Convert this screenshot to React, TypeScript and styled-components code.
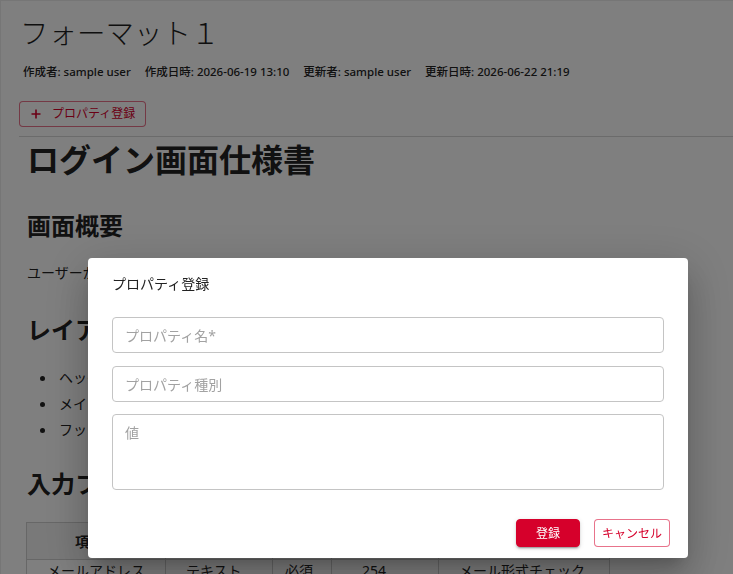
import React from 'react'
import styled, { createGlobalStyle } from 'styled-components'

const GlobalStyle = createGlobalStyle`
  html, body {
    margin: 0;
    padding: 0;
    background: #fff;
  }
  body {
    font-family: "Noto Sans", "Noto Sans CJK JP", sans-serif;
    color: #222;
    overflow: hidden;
  }
`

const RED = '#d6002b'

const Page = styled.div`
  height: 574px;
  box-sizing: border-box;
  border-top: 1px solid #ececec;
  border-left: 1px solid #ececec;
`

const Header = styled.header`
  margin-left: 18px;
  padding: 13px 0 9px 0;
  border-bottom: 1px solid #d6d6d6;
`

const Title = styled.h1`
  margin: 0 0 0 1px;
  font-size: 28.5px;
  line-height: 38px;
  font-weight: 300;
  color: #1e1e1e;
`

const Meta = styled.div`
  display: flex;
  gap: 14px;
  margin: 11px 0 0 4px;
  font-size: 11.5px;
  line-height: 18px;
  font-weight: 500;
  color: #222;
`

const OutlineButton = styled.button`
  display: inline-flex;
  align-items: center;
  gap: 10px;
  height: 26px;
  margin-top: 20px;
  padding: 0 10px;
  background: #fff;
  border: 1px solid rgba(214, 0, 43, 0.55);
  border-radius: 4px;
  color: ${RED};
  font-family: inherit;
  font-size: 12px;
  line-height: 1;
  cursor: pointer;
`

const Content = styled.main`
  padding: 0 24px 0 25px;
`

const DocTitle = styled.h1`
  margin: 4px 0 0 1px;
  font-size: 32px;
  line-height: 38px;
  font-weight: 700;
`

const Section = styled.h2<{ $top: number }>`
  margin: ${p => p.$top}px 0 0 1px;
  font-size: 24px;
  line-height: 30px;
  font-weight: 700;
`

const Para = styled.p`
  margin: 21px 0 0 1px;
  font-size: 14px;
  line-height: 22px;
`

const List = styled.ul`
  margin: 20px 0 0;
  padding: 0;
  list-style: none;
  font-size: 14px;
  line-height: 26px;
`

const Item = styled.li`
  display: flex;
  align-items: center;
  &::before {
    content: '';
    width: 5px;
    height: 5px;
    margin: 0 14px 0 14px;
    border-radius: 50%;
    background: #222;
  }
`

const Table = styled.table`
  margin-top: 23px;
  border-collapse: collapse;
  font-size: 14px;
`

const Th = styled.th<{ $w: number }>`
  width: ${p => p.$w}px;
  height: 37px;
  box-sizing: border-box;
  padding: 0 12px;
  background: #f3f3f3;
  border: 1px solid #cfcfcf;
  font-weight: 700;
  text-align: center;
`

const Td = styled.td<{ $pad?: number }>`
  padding: 0 12px 8px ${p => p.$pad ?? 20}px;
  border: 1px solid #cfcfcf;
  line-height: 22px;
  white-space: nowrap;
`

const Overlay = styled.div`
  position: fixed;
  inset: 0;
  background: rgba(0, 0, 0, 0.5);
  display: flex;
  align-items: flex-start;
  padding: 258px 0 0 88px;
`

const Dialog = styled.div`
  width: 600px;
  height: 300px;
  box-sizing: border-box;
  padding: 16px 18px 11px 24px;
  background: #fff;
  border-radius: 4px;
  box-shadow: 0px 11px 15px -7px rgba(0, 0, 0, 0.2),
    0px 24px 38px 3px rgba(0, 0, 0, 0.14),
    0px 9px 46px 8px rgba(0, 0, 0, 0.12);
  display: flex;
  flex-direction: column;
`

const DialogTitle = styled.div`
  font-size: 14px;
  line-height: 20px;
  color: #222;
`

const Fields = styled.div`
  display: flex;
  flex-direction: column;
  gap: 13px;
  margin-top: 23px;
  width: 552px;
`

const Input = styled.input`
  height: 36px;
  box-sizing: border-box;
  padding: 0 12px;
  border: 1px solid #c4c4c4;
  border-radius: 4px;
  font-family: inherit;
  font-size: 14px;
  color: #222;
  outline: none;
  &::placeholder {
    color: #a2a2a2;
  }
`

const TextArea = styled.textarea`
  height: 76px;
  margin-top: -1px;
  box-sizing: border-box;
  padding: 8px 12px;
  border: 1px solid #c4c4c4;
  border-radius: 4px;
  font-family: inherit;
  font-size: 14px;
  line-height: 20px;
  resize: none;
  outline: none;
  &::placeholder {
    color: #a2a2a2;
  }
`

const Actions = styled.div`
  display: flex;
  justify-content: flex-end;
  gap: 14px;
  margin-top: auto;
`

const ActionButton = styled.button<{ $primary?: boolean }>`
  height: 28px;
  min-width: 64px;
  padding: 0 7px;
  box-sizing: border-box;
  border-radius: 4px;
  font-family: inherit;
  font-size: 12px;
  cursor: pointer;
  background: ${p => (p.$primary ? RED : '#fff')};
  color: ${p => (p.$primary ? '#fff' : RED)};
  border: 1px solid ${p => (p.$primary ? RED : 'rgba(214, 0, 43, 0.55)')};
  box-shadow: ${p =>
    p.$primary
      ? '0px 3px 1px -2px rgba(0,0,0,0.2), 0px 2px 2px 0px rgba(0,0,0,0.14), 0px 1px 5px 0px rgba(0,0,0,0.12)'
      : 'none'};
`

const PlusIcon = () => (
  <svg width="12" height="12" viewBox="0 0 12 12">
    <path d="M6 1.5v9M1.5 6h9" stroke={RED} strokeWidth="1.6" fill="none" />
  </svg>
)

export default function App() {
  return (
    <>
      <GlobalStyle />
      <Page>
        <Header>
          <Title>フォーマット１</Title>
          <Meta>
            <span>作成者: sample user</span>
            <span>作成日時: 2026-06-19 13:10</span>
            <span>更新者: sample user</span>
            <span>更新日時: 2026-06-22 21:19</span>
          </Meta>
          <OutlineButton>
            <PlusIcon />
            プロパティ登録
          </OutlineButton>
        </Header>
        <Content>
          <DocTitle>ログイン画面仕様書</DocTitle>
          <Section $top={32}>画面概要</Section>
          <Para>ユーザーがIDとパスワードでログインする画面。</Para>
          <Section $top={31}>レイアウト</Section>
          <List>
            <Item>ヘッダー：ロゴ表示</Item>
            <Item>メイン：ログインフォーム</Item>
            <Item>フッター：コピーライト</Item>
          </List>
          <Section $top={26}>入力フィールド</Section>
          <Table>
            <thead>
              <tr>
                <Th $w={139}>項目名</Th>
                <Th $w={107}>型</Th>
                <Th $w={59}>必須</Th>
                <Th $w={107}>最大長</Th>
                <Th $w={171}>備考</Th>
              </tr>
            </thead>
            <tbody>
              <tr>
                <Td>メールアドレス</Td>
                <Td>テキスト</Td>
                <Td $pad={12}>必須</Td>
                <Td $pad={30}>254</Td>
                <Td>メール形式チェック</Td>
              </tr>
            </tbody>
          </Table>
        </Content>
      </Page>
      <Overlay>
        <Dialog>
          <DialogTitle>プロパティ登録</DialogTitle>
          <Fields>
            <Input placeholder="プロパティ名*" />
            <Input placeholder="プロパティ種別" />
            <TextArea placeholder="値" />
          </Fields>
          <Actions>
            <ActionButton $primary>登録</ActionButton>
            <ActionButton>キャンセル</ActionButton>
          </Actions>
        </Dialog>
      </Overlay>
    </>
  )
}
